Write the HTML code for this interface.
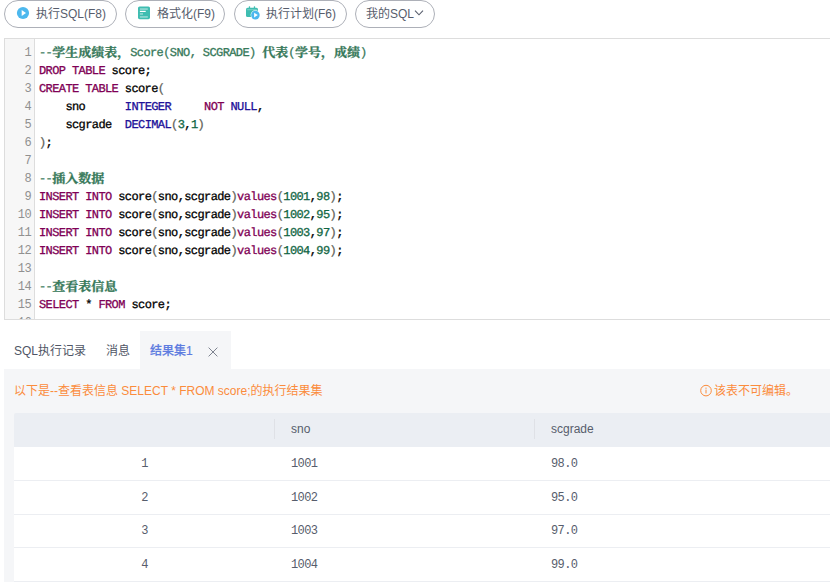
<!DOCTYPE html>
<html lang="zh-CN">
<head>
<meta charset="utf-8">
<title>SQL</title>
<style>
*{box-sizing:border-box;margin:0;padding:0}
html,body{width:830px;height:582px;overflow:hidden;background:#fff}
body{position:relative;font-family:"Liberation Sans","Noto Sans CJK SC",sans-serif;font-size:12px;color:#575d6c}
.btn{position:absolute;top:0;height:28px;border:1px solid #adb0b8;border-radius:14px;background:#fff;color:#575d6c;font-size:12px;line-height:26px;white-space:nowrap}
.btn svg{position:absolute}
.btn span{position:absolute;top:0}
#ed{position:absolute;left:4px;top:38px;width:830px;height:282px;border:1px solid #dddddd;overflow:hidden;background:#fff}
#gut{position:absolute;left:0;top:0;width:30px;height:300px;background:#f7f7f7;border-right:1px solid #dddddd}
.ln{position:absolute;left:0;width:26px;text-align:right;color:#909090;font-family:"Liberation Mono",monospace;font-size:12px;letter-spacing:-0.6px;height:18px;line-height:18px}
.cl{position:absolute;left:34px;height:18px;line-height:18px;font-family:"Liberation Mono","Noto Sans CJK SC",monospace;font-size:12px;letter-spacing:-0.6px;-webkit-text-stroke:0.3px;text-rendering:geometricPrecision;color:#000;white-space:pre}
.z{font-family:"Noto Serif CJK SC",serif;font-size:13px;letter-spacing:0;font-weight:bold;line-height:0;position:relative;top:1px;-webkit-text-stroke:0.3px #37795a}
.k{color:#7f0055}.p{color:#626258}.c{color:#37795a}.n{color:#116644}.b{color:#221199}
.tab{position:absolute;top:331px;height:38px;line-height:41px;font-size:12px;color:#4f5565;white-space:nowrap}
#panel{position:absolute;left:4px;top:369px;width:826px;height:213px;background:#f5f6f8}
#tbl{position:absolute;left:14px;top:413px;width:816px}
.hd{position:absolute;left:0;top:0;width:816px;height:34px;background:#ebeef3;border-radius:2px 0 0 0}
.row{position:absolute;left:0;width:816px;height:34px;background:#fff;border-bottom:1px solid #eceef2}
.cell{position:absolute;top:0;height:34px;line-height:34px;font-size:11px;color:#575d6c;white-space:nowrap}
.r3 .cell{height:33px;line-height:32px}
.mono{font-family:"Liberation Mono",monospace;font-size:12px;letter-spacing:-0.6px}
</style>
</head>
<body>
<div class="btn" style="left:4px;width:113px"><svg style="left:11px;top:5px" width="14" height="14" viewBox="0 0 14 14"><circle cx="7" cy="7" r="6.1" fill="#4db8ee"/><path d="M5.7 4.1 L10 7 L5.7 9.9 Z" fill="#fff"/></svg><span style="left:31px">执行SQL(F8)</span></div>
<div class="btn" style="left:125px;width:100px"><svg style="left:12px;top:5px" width="13" height="14" viewBox="0 0 13 14"><rect x="0" y="0.4" width="12" height="12.8" rx="1.6" fill="#3fbdb1"/><rect x="1.9" y="2.4" width="7.9" height="1.3" fill="#fff" fill-opacity=".55"/><rect x="1.9" y="4.8" width="5.8" height="1.2" fill="#fff"/><rect x="1.9" y="7.3" width="3.1" height="1.3" fill="#fff" fill-opacity=".55"/><rect x="1.9" y="10.3" width="7.9" height="1.3" fill="#fff" fill-opacity=".55"/></svg><span style="left:31px">格式化(F9)</span></div>
<div class="btn" style="left:234px;width:113px"><svg style="left:10px;top:5px" width="16" height="15" viewBox="0 0 16 15"><rect x="1" y="1.7" width="12" height="9.4" rx="1.6" fill="#3fbdb1"/><rect x="3.8" y="0.3" width="1.3" height="2.5" rx=".5" fill="#3fbdb1"/><rect x="8.8" y="0.3" width="1.3" height="2.5" rx=".5" fill="#3fbdb1"/><rect x="2.2" y="3.3" width="9.6" height="0.9" fill="#fff" fill-opacity=".35"/><circle cx="10.4" cy="9.1" r="4.8" fill="#fff"/><circle cx="10.4" cy="9.1" r="4.3" fill="#4db8ee"/><path d="M9.1 6.8 L12.8 9.1 L9.1 11.4 Z" fill="#fff"/></svg><span style="left:31px">执行计划(F6)</span></div>
<div class="btn" style="left:355px;width:80px"><span style="left:10px">我的SQL</span><svg style="left:57px;top:7px" width="12" height="10" viewBox="0 0 12 10"><path d="M2 2.6 L6 6.8 L10 2.6" fill="none" stroke="#575d6c" stroke-width="1.1"/></svg></div>

<div id="ed">
<div id="gut"></div>
<div class="ln" style="top:5px">1</div><div class="cl c" style="top:5px">--<span class="z">学生成绩表，</span>Score(SNO, SCGRADE) <span class="z">代表</span>(<span class="z">学号，成绩</span>)</div>
<div class="ln" style="top:23px">2</div><div class="cl" style="top:23px"><span class="k">DROP TABLE</span> score;</div>
<div class="ln" style="top:41px">3</div><div class="cl" style="top:41px"><span class="k">CREATE TABLE</span> score<span class="p">(</span></div>
<div class="ln" style="top:59px">4</div><div class="cl" style="top:59px">    sno      <span class="b">INTEGER</span>     <span class="k">NOT</span> <span class="b">NULL</span>,</div>
<div class="ln" style="top:77px">5</div><div class="cl" style="top:77px">    scgrade  <span class="b">DECIMAL</span><span class="p">(</span><span class="n">3</span>,<span class="n">1</span><span class="p">)</span></div>
<div class="ln" style="top:95px">6</div><div class="cl" style="top:95px"><span class="p">)</span>;</div>
<div class="ln" style="top:113px">7</div>
<div class="ln" style="top:131px">8</div><div class="cl c" style="top:131px">--<span class="z">插入数据</span></div>
<div class="ln" style="top:149px">9</div><div class="cl" style="top:149px"><span class="k">INSERT INTO</span> score<span class="p">(</span>sno,scgrade<span class="p">)</span><span class="k">values</span><span class="p">(</span><span class="n">1001</span>,<span class="n">98</span><span class="p">)</span>;</div>
<div class="ln" style="top:167px">10</div><div class="cl" style="top:167px"><span class="k">INSERT INTO</span> score<span class="p">(</span>sno,scgrade<span class="p">)</span><span class="k">values</span><span class="p">(</span><span class="n">1002</span>,<span class="n">95</span><span class="p">)</span>;</div>
<div class="ln" style="top:185px">11</div><div class="cl" style="top:185px"><span class="k">INSERT INTO</span> score<span class="p">(</span>sno,scgrade<span class="p">)</span><span class="k">values</span><span class="p">(</span><span class="n">1003</span>,<span class="n">97</span><span class="p">)</span>;</div>
<div class="ln" style="top:203px">12</div><div class="cl" style="top:203px"><span class="k">INSERT INTO</span> score<span class="p">(</span>sno,scgrade<span class="p">)</span><span class="k">values</span><span class="p">(</span><span class="n">1004</span>,<span class="n">99</span><span class="p">)</span>;</div>
<div class="ln" style="top:221px">13</div>
<div class="ln" style="top:239px">14</div><div class="cl c" style="top:239px">--<span class="z">查看表信息</span></div>
<div class="ln" style="top:257px">15</div><div class="cl" style="top:257px"><span class="k">SELECT</span> * <span class="k">FROM</span> score;</div>
<div class="ln" style="top:275px">16</div>
</div>

<div class="tab" style="left:14px">SQL执行记录</div>
<div class="tab" style="left:106px">消息</div>
<div class="tab" style="left:140px;width:91px;background:#f5f6f8"><span style="position:absolute;left:10px;color:#5e7ce0;font-weight:500;-webkit-text-stroke:0.2px #5e7ce0">结果集1</span><svg style="position:absolute;left:68px;top:16px" width="10" height="10" viewBox="0 0 10 10"><path d="M0.6 0.6 L9.4 9.4 M9.4 0.6 L0.6 9.4" stroke="#7e838f" stroke-width="1" fill="none"/></svg></div>

<div id="panel"></div>
<div style="position:absolute;left:14px;top:381px;height:20px;line-height:20px;font-size:12px;color:#fb8c3c;white-space:nowrap">以下是--查看表信息 SELECT * FROM score;的执行结果集</div>
<div style="position:absolute;left:700px;top:381px;height:20px;line-height:20px;font-size:12px;color:#fb8c3c;white-space:nowrap"><svg style="position:absolute;left:0;top:3px" width="12" height="13" viewBox="0 0 12 13"><circle cx="6" cy="6.6" r="5.3" fill="none" stroke="#fb8c3c" stroke-width="1"/><rect x="5.5" y="5.6" width="1" height="3.8" fill="#fb8c3c"/><rect x="5.5" y="3.6" width="1" height="1.2" fill="#fb8c3c"/></svg><span style="position:absolute;left:14px">该表不可编辑。</span></div>

<div id="tbl">
<div class="hd"><div style="position:absolute;left:260px;top:6px;width:1px;height:20px;background:#dfe1e6"></div><div style="position:absolute;left:520px;top:6px;width:1px;height:20px;background:#dfe1e6"></div><div class="cell" style="left:277px;font-size:12px;line-height:32px">sno</div><div class="cell" style="left:537px;font-size:12px;line-height:32px">scgrade</div></div>
<div class="row" style="top:34px"><div class="cell mono" style="left:0;width:261px;text-align:center">1</div><div class="cell mono" style="left:277px">1001</div><div class="cell mono" style="left:537px">98.0</div></div>
<div class="row" style="top:68px"><div class="cell mono" style="left:0;width:261px;text-align:center">2</div><div class="cell mono" style="left:277px">1002</div><div class="cell mono" style="left:537px">95.0</div></div>
<div class="row r3" style="top:102px;height:33px"><div class="cell mono" style="left:0;width:261px;text-align:center">3</div><div class="cell mono" style="left:277px">1003</div><div class="cell mono" style="left:537px">97.0</div></div>
<div class="row" style="top:135px"><div class="cell mono" style="left:0;width:261px;text-align:center">4</div><div class="cell mono" style="left:277px">1004</div><div class="cell mono" style="left:537px">99.0</div></div>
</div>
</body>
</html>
